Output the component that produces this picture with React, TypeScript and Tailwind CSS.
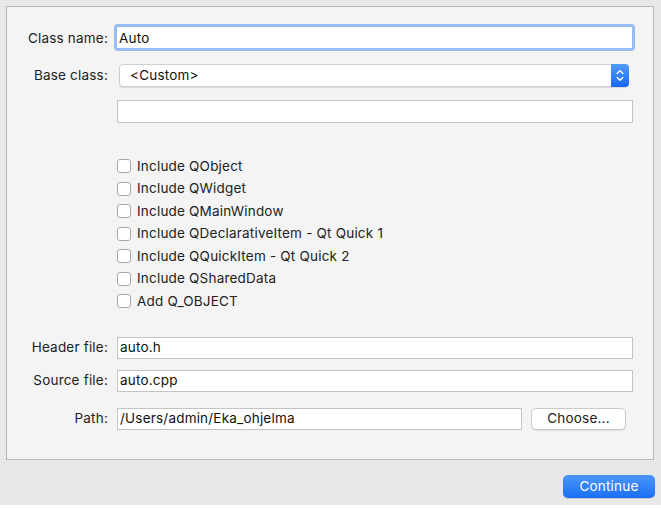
import React from "react";

const font = { fontFamily: "Inter, 'Noto Sans', 'Liberation Sans', sans-serif" };

function Label({ children, className = "" }: { children: React.ReactNode; className?: string }) {
  return (
    <div className={"w-[101px] shrink-0 text-right text-[13.5px] tracking-[0.2px] text-[#222] leading-none " + className}>{children}</div>
  );
}

function Field({ value, className = "" }: { value?: string; className?: string }) {
  return (
    <div
      className={
        "h-[22px] bg-white border border-[#c4c4c4] flex items-center pl-[2px] text-[13.5px] tracking-[0.2px] text-[#111] leading-none " +
        className
      }
    >
      {value}
    </div>
  );
}

function Check({ label }: { label: string }) {
  return (
    <div className="h-[22.5px] flex items-center pl-[110px]">
      <div className="w-[14px] h-[14px] rounded-[3px] bg-white border border-[#a9a9a9] shrink-0" />
      <span className="ml-[6px] text-[13.5px] tracking-[0.2px] text-[#222] leading-none">{label}</span>
    </div>
  );
}

export default function App() {
  return (
    <div style={font} className="w-[661px] h-[508px] bg-white">
      <div className="h-[505px] bg-[#e8e8e8] pt-[6px] pl-[6px]">
        <div className="w-[648px] h-[454px] border border-[#b6b6b6] bg-[#f4f4f4] pt-[17px]">
          {/* Class name */}
          <div className="flex items-center h-[27px]">
            <Label className="pt-[3px]">Class name:</Label>
            <div className="ml-[6px] w-[521px] h-[27px] rounded-[4px] border-[3px] border-[#97bdf3] bg-white flex items-center pl-[2px] pt-[2px] text-[13.5px] tracking-[0.2px] text-[#111] leading-none">
              Auto
            </div>
          </div>
          {/* Base class */}
          <div className="flex items-center h-[23px] mt-[13px]">
            <Label className="pt-[1px]">Base class:</Label>
            <div className="ml-[11px] w-[510px] h-[23px] rounded-[4px] bg-white border border-[#cfcfcf] shadow-[0_1px_1px_rgba(0,0,0,0.12)] flex items-center">
              <span className="pl-[10px] pt-[1px] flex-1 text-[13.5px] tracking-[0.2px] text-[#111] leading-none">&lt;Custom&gt;</span>
              <div className="w-[18px] h-[23px] -mr-px rounded-r-[4px] bg-gradient-to-b from-[#4f9bfb] to-[#1668f5] flex items-center justify-center">
                <svg width="8" height="13" viewBox="0 0 8 13" fill="none" stroke="white" strokeWidth="1.5" strokeLinecap="round" strokeLinejoin="round">
                  <path d="M1.2 4.5 L4 1.7 L6.8 4.5" />
                  <path d="M1.2 8.5 L4 11.3 L6.8 8.5" />
                </svg>
              </div>
            </div>
          </div>
          {/* Empty field */}
          <div className="flex items-center mt-[13px]">
            <div className="w-[110px] shrink-0" />
            <Field className="w-[516px] h-[23px]" />
          </div>
          {/* Checkboxes */}
          <div className="mt-[32px] flex flex-col">
            <Check label="Include QObject" />
            <Check label="Include QWidget" />
            <Check label="Include QMainWindow" />
            <Check label="Include QDeclarativeItem - Qt Quick 1" />
            <Check label="Include QQuickItem - Qt Quick 2" />
            <Check label="Include QSharedData" />
            <Check label="Add Q_OBJECT" />
          </div>
          {/* Header file */}
          <div className="flex items-center mt-[24px]">
            <Label>Header file:</Label>
            <Field value="auto.h" className="ml-[9px] w-[516px]" />
          </div>
          <div className="flex items-center mt-[11px]">
            <Label>Source file:</Label>
            <Field value="auto.cpp" className="ml-[9px] w-[516px]" />
          </div>
          <div className="flex items-center mt-[16px]">
            <Label>Path:</Label>
            <Field value="/Users/admin/Eka_ohjelma" className="ml-[9px] w-[405px]" />
            <div className="ml-[9px] w-[95px] h-[22px] rounded-[5px] bg-white border border-[#cacaca] shadow-[0_1px_1px_rgba(0,0,0,0.1)] flex items-center justify-center text-[13.5px] tracking-[0.2px] text-[#222] leading-none">
              Choose...
            </div>
          </div>
        </div>
        <div className="flex mt-[15px]">
          <div className="ml-[557px] w-[92px] h-[23px] rounded-[5px] bg-gradient-to-b from-[#4a97fa] to-[#1a6ef5] flex items-center justify-center text-[13.5px] tracking-[0.2px] text-white leading-none shadow-[0_1px_1px_rgba(0,0,0,0.15)]">
            Continue
          </div>
        </div>
      </div>
    </div>
  );
}
